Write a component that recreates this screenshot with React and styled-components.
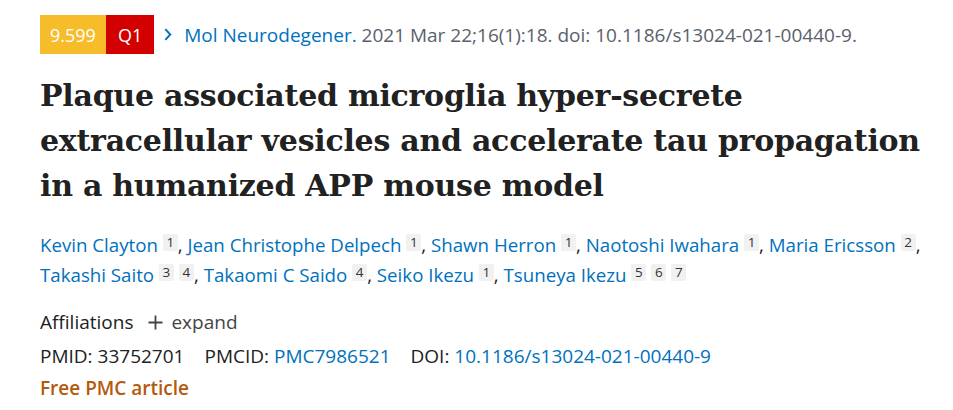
import styled, { createGlobalStyle } from 'styled-components';

const GlobalStyle = createGlobalStyle`
  body {
    margin: 0;
    background: #fff;
    font-family: 'Open Sans', 'Noto Sans', sans-serif;
    color: #212121;
  }
`;

const authors = [
  { name: 'Kevin Clayton', refs: [1] },
  { name: 'Jean Christophe Delpech', refs: [1] },
  { name: 'Shawn Herron', refs: [1] },
  { name: 'Naotoshi Iwahara', refs: [1] },
  { name: 'Maria Ericsson', refs: [2] },
  { name: 'Takashi Saito', refs: [3, 4] },
  { name: 'Takaomi C Saido', refs: [4] },
  { name: 'Seiko Ikezu', refs: [1] },
  { name: 'Tsuneya Ikezu', refs: [5, 6, 7] },
];

export default function App() {
  return (
    <>
      <GlobalStyle />
      <Page>
        <Citation>
          <Badge color="#f6bc2a">9.599</Badge>
          <Badge color="#d20000" wide>
            Q1
          </Badge>
          <Chevron viewBox="0 0 8 13" aria-hidden="true">
            <path d="M1.3 1.2l5 5.3-5 5.3" fill="none" stroke="#0071bc" strokeWidth="1.9" />
          </Chevron>
          <Journal>Mol Neurodegener.</Journal>
          <span>&nbsp;2021 Mar 22;16(1):18. doi: 10.1186/s13024-021-00440-9.</span>
        </Citation>

        <Title>
          Plaque associated microglia hyper-secrete extracellular vesicles and accelerate tau propagation in a
          humanized APP mouse model
        </Title>

        <Authors>
          {authors.map((a, i) => (
            <span key={a.name}>
              <Link>{a.name}</Link>{' '}
              <RefGroup>
                {a.refs.map((r) => (
                  <Ref key={r}>{r}</Ref>
                ))}
                {i < authors.length - 1 && ','}
              </RefGroup>{' '}
            </span>
          ))}
        </Authors>

        <Affiliations>
          <span>Affiliations</span>
          <Expand>
            <svg width="15" height="15" viewBox="0 0 15 15" aria-hidden="true">
              <path d="M7.5 0.5v14M0.5 7.5h14" stroke="#444" strokeWidth="1.8" />
            </svg>
            expand
          </Expand>
        </Affiliations>

        <Identifiers>
          <span>
            PMID: <Plain>33752701</Plain>
          </span>
          <span>
            PMCID: <Link>PMC7986521</Link>
          </span>
          <span>
            DOI: <Link>10.1186/s13024-021-00440-9</Link>
          </span>
        </Identifiers>

        <FreeArticle>Free PMC article</FreeArticle>
      </Page>
    </>
  );
}

const Page = styled.div`
  padding: 15px 0 0 40px;
  width: 953px;
  box-sizing: border-box;
`;

const Citation = styled.div`
  display: flex;
  align-items: center;
  font-size: 19px;
  color: #5b616b;
  height: 39px;
  white-space: nowrap;
`;

const Badge = styled.span`
  display: flex;
  align-items: center;
  justify-content: center;
  height: 39px;
  padding: 0 ${(props) => (props.wide ? '12px' : '10px')};
  background: ${(props) => props.color};
  color: #fff;
  font-size: 18px;
`;

const Chevron = styled.svg`
  width: 8px;
  height: 13px;
  margin: 0 12px 0 10px;
`;

const Journal = styled.span`
  color: #0071bc;
`;

const Title = styled.h1`
  margin: 19px 0 0;
  font-family: 'DejaVu Serif', serif;
  font-weight: 700;
  font-size: 30px;
  line-height: 45px;
  letter-spacing: -0.25px;
  color: #212121;
`;

const Authors = styled.div`
  margin-top: 22px;
  font-size: 18.7px;
  line-height: 30px;
`;

const RefGroup = styled.span`
  white-space: nowrap;
`;

const Link = styled.span`
  color: #0071bc;
`;

const Plain = styled.span`
  color: #212121;
`;

const Ref = styled.sup`
  display: inline-block;
  min-width: 15px;
  height: 17px;
  padding: 0 1px;
  background: #f1f1f1;
  border-radius: 2px;
  color: #333;
  font-size: 13.5px;
  line-height: 17px;
  text-align: center;
  vertical-align: 5px;
  box-sizing: border-box;

  & + & {
    margin-left: 5px;
  }
`;

const Affiliations = styled.div`
  display: flex;
  align-items: center;
  gap: 15px;
  margin-top: 17px;
  font-size: 19px;
  line-height: 30px;
`;

const Expand = styled.span`
  display: flex;
  align-items: center;
  gap: 8px;
  color: #444;
`;

const Identifiers = styled.div`
  display: flex;
  gap: 20px;
  margin-top: 4px;
  font-size: 19px;
  line-height: 30px;
`;

const FreeArticle = styled.div`
  margin-top: 2px;
  font-size: 19px;
  line-height: 30px;
  font-weight: 600;
  color: #b5590d;
`;
